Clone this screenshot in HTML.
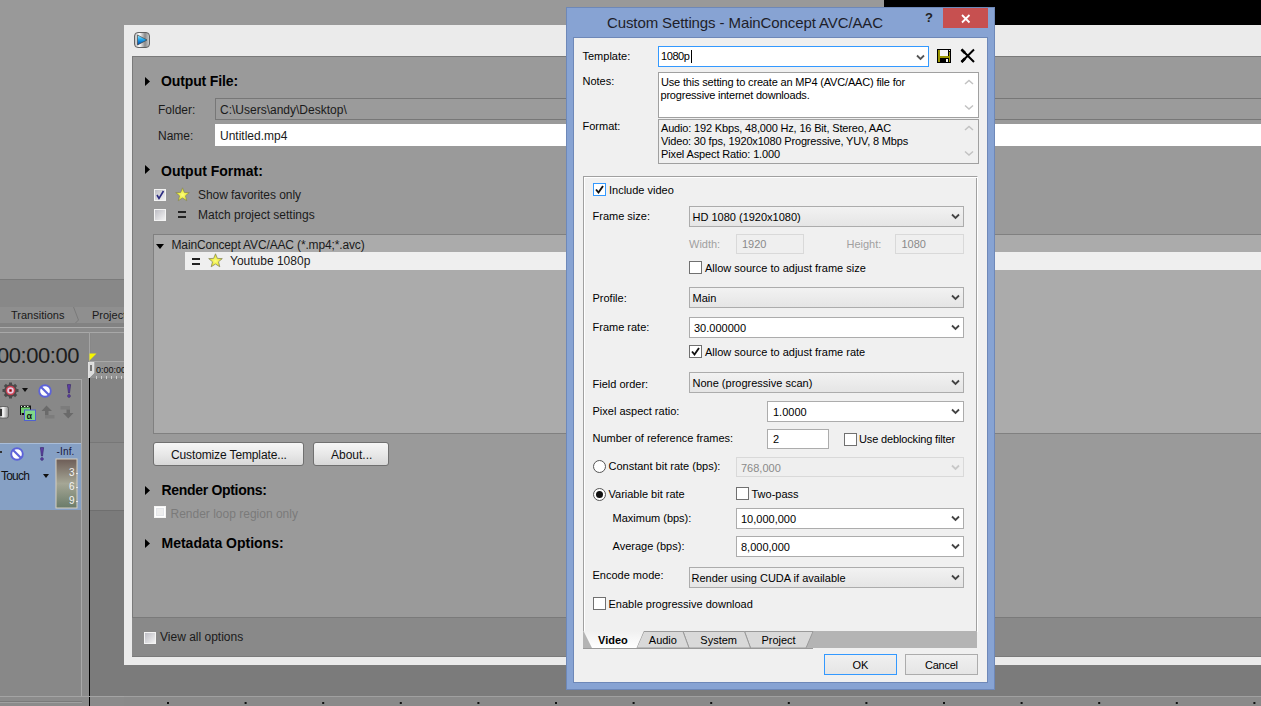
<!DOCTYPE html><html><head><meta charset="utf-8"><style>
html,body{margin:0;padding:0;width:1261px;height:706px;overflow:hidden;position:relative;background:#999}
body>div,body>svg{position:absolute}
.t{white-space:pre;font-family:"Liberation Sans",sans-serif}
</style></head><body>
<div style="left:0px;top:0px;width:1261px;height:706px;background:#999999"></div>
<div style="left:0px;top:279px;width:124px;height:427px;background:#888888"></div>
<div style="left:0px;top:279px;width:124px;height:1px;background:#7a7a7a"></div>
<div style="left:0px;top:307px;width:124px;height:16px;background:#8f8f8f"></div>
<div style="left:0px;top:323px;width:124px;height:4px;background:#828282"></div>
<div style="left:0px;top:327px;width:124px;height:1px;background:#ababab"></div>
<div style="left:0px;top:328px;width:124px;height:4px;background:#8a8a8a"></div>
<div style="left:0px;top:332px;width:124px;height:1px;background:#a8a8a8"></div>
<div class="t" style="left:11px;top:309.69px;font-size:11px;line-height:11px;color:#1a1a1a;">Transitions</div>
<div class="t" style="left:92px;top:309.69px;font-size:11px;line-height:11px;color:#1a1a1a;">Project</div>
<svg style="left:0;top:307px" width="124" height="20"><polyline points="73.5,0 78.5,13 75.5,16" stroke="#7a7a7a" fill="none"/></svg>
<div class="t" style="left:-3px;top:345.38px;font-size:22px;line-height:22px;color:#1c1c1c;letter-spacing:-0.455px;">00:00:00</div>
<div style="left:89px;top:332px;width:1px;height:46px;background:#a4a4a4"></div>
<div style="left:89px;top:378px;width:1px;height:328px;background:#000"></div>
<div style="left:91px;top:333px;width:33px;height:29px;background:#8b8b8b"></div>
<div style="left:90px;top:361px;width:34px;height:1px;background:#a8a8a8"></div>
<div style="left:90px;top:362px;width:34px;height:16px;background:#939393"></div>
<svg style="left:89px;top:353px" width="10" height="9"><polygon points="0.5,0.5 7.5,0.5 0.5,7.5" fill="#f6f600"/></svg>
<svg style="left:88px;top:362px" width="8" height="17"><polygon points="0,0 6,0 6,11 1,16 0,16" fill="#dcdcdc" stroke="#f0f0f0" stroke-width="0.5"/><rect x="2" y="3" width="2" height="6" fill="#777"/></svg>
<div class="t" style="left:96px;top:366.38px;font-size:9px;line-height:9px;color:#111;">0:00:00</div>
<div style="left:0px;top:379px;width:82px;height:1px;background:#a8a8a8"></div>
<div style="left:81px;top:379px;width:1px;height:327px;background:#a8a8a8"></div>
<div style="left:0px;top:380px;width:81px;height:316px;background:#888888"></div>
<div style="left:82px;top:378px;width:7px;height:328px;background:#8b8b8b"></div>
<div style="left:90px;top:378px;width:34px;height:64px;background:#848484"></div>
<div style="left:90px;top:442px;width:34px;height:1px;background:#777777"></div>
<div style="left:90px;top:443px;width:34px;height:67px;background:#878787"></div>
<div style="left:90px;top:510px;width:34px;height:1px;background:#6f6f6f"></div>
<div style="left:90px;top:511px;width:34px;height:186px;background:#7b7b7b"></div>
<svg style="left:90px;top:375px" width="34" height="4"><rect x="6" y="1" width="1" height="3" fill="#d0d0d0"/><rect x="11" y="1" width="1" height="3" fill="#d0d0d0"/><rect x="16" y="1" width="1" height="3" fill="#d0d0d0"/><rect x="21" y="1" width="1" height="3" fill="#d0d0d0"/><rect x="26" y="1" width="1" height="3" fill="#d0d0d0"/><rect x="31" y="1" width="1" height="3" fill="#d0d0d0"/></svg>
<div style="left:0px;top:443px;width:81px;height:67px;background:#86a0c4"></div>
<div style="left:0px;top:443px;width:81px;height:1px;background:#a9bdd9"></div>
<div style="left:0px;top:696px;width:124px;height:1px;background:#a4a4a4"></div>
<div style="left:0px;top:697px;width:124px;height:9px;background:#8b8b8b"></div>
<div style="left:0px;top:701px;width:82px;height:1px;background:#7a7a7a"></div>
<div style="left:0px;top:702px;width:82px;height:1px;background:#a0a0a0"></div>
<div style="left:89px;top:697px;width:1px;height:9px;background:#000"></div>
<svg style="left:2px;top:382px" width="18" height="18" viewBox="0 0 18 18">
<g fill="#4a4a4a"><circle cx="8.5" cy="8.5" r="6.3"/>
<rect x="7" y="0.5" width="3" height="16"/><rect x="0.5" y="7" width="16" height="3"/>
<rect x="7" y="0.5" width="3" height="16" transform="rotate(45 8.5 8.5)"/><rect x="7" y="0.5" width="3" height="16" transform="rotate(-45 8.5 8.5)"/></g>
<circle cx="8.5" cy="8.5" r="4.8" fill="#c84050"/><circle cx="8.5" cy="8.5" r="3.3" fill="#e8c8e0"/><rect x="7.3" y="7.3" width="2.4" height="2.4" fill="#900"/></svg>
<svg style="left:22px;top:388px" width="7" height="5"><polygon points="0,0 6,0 3,4" fill="#111"/></svg>
<svg style="left:38px;top:384px" width="14" height="14" viewBox="0 0 14 14"><circle cx="7" cy="7" r="5.8" fill="#fff" stroke="#5d63d8" stroke-width="1.9"/><line x1="3" y1="3" x2="11" y2="11" stroke="#5d63d8" stroke-width="2.2"/></svg>
<svg style="left:66px;top:384px" width="6" height="14" viewBox="0 0 6 14"><polygon points="1.4,0.6 4.6,0.6 3.5,9 2.5,9" fill="#6040a8" stroke="#302060" stroke-width="0.6"/><circle cx="3" cy="12" r="1.4" fill="#6040a8" stroke="#302060" stroke-width="0.5"/></svg>
<svg style="left:-3px;top:406px" width="12" height="13"><defs><linearGradient id="sl" x1="0" x2="1"><stop offset="0" stop-color="#555"/><stop offset="0.5" stop-color="#fafafa"/><stop offset="1" stop-color="#888"/></linearGradient></defs><rect x="0.5" y="0.5" width="11" height="11.5" rx="2" fill="url(#sl)" stroke="#555" stroke-width="0.8"/><rect x="2" y="3" width="3" height="7" fill="#333"/></svg>
<svg style="left:20px;top:405px" width="16" height="16" viewBox="0 0 16 16">
<rect x="0" y="0.5" width="11" height="9.5" fill="#111"/><rect x="1" y="2.5" width="9" height="5.5" fill="#70d070"/>
<g fill="#eee"><rect x="1" y="1" width="1" height="1"/><rect x="4" y="1" width="1.5" height="1"/><rect x="7" y="1" width="1.5" height="1"/><rect x="1" y="8.5" width="1" height="1"/></g>
<rect x="4.5" y="5" width="11" height="10.5" fill="#80d888" stroke="#5060d0" stroke-width="1"/>
<text x="6.5" y="13.5" font-family="Liberation Sans" font-size="9" font-weight="bold" fill="#111">&#945;</text></svg>
<svg style="left:41px;top:405px" width="14" height="15"><polygon points="5.5,0.5 11,6 7.5,6 7.5,10 4,10 4,6 0.5,6" fill="#6a6a6a"/><rect x="4" y="10" width="9.5" height="3.5" fill="#7c7c7c"/></svg>
<svg style="left:60px;top:406px" width="15" height="14"><rect x="0.5" y="0" width="9.5" height="3.5" fill="#7c7c7c"/><polygon points="6.5,3.5 10,3.5 10,7 13.5,7 8.3,12.5 3,7 6.5,7" fill="#6a6a6a"/></svg>
<div style="left:0px;top:451px;width:2px;height:2px;background:#333"></div>
<svg style="left:10px;top:447px" width="14" height="14" viewBox="0 0 14 14"><circle cx="7" cy="7" r="5.8" fill="#fff" stroke="#5d63d8" stroke-width="1.9"/><line x1="3" y1="3" x2="11" y2="11" stroke="#5d63d8" stroke-width="2.2"/></svg>
<svg style="left:39px;top:447px" width="6" height="14" viewBox="0 0 6 14"><polygon points="1.4,0.6 4.6,0.6 3.5,9 2.5,9" fill="#6040a8" stroke="#302060" stroke-width="0.6"/><circle cx="3" cy="12" r="1.4" fill="#6040a8" stroke="#302060" stroke-width="0.5"/></svg>
<div class="t" style="left:56.5px;top:446.53px;font-size:10px;line-height:10px;color:#1a1a40;letter-spacing:0.155px;">-Inf.</div>
<svg style="left:55px;top:458px" width="23" height="51" viewBox="0 0 23 51"><defs><linearGradient id="mg" x1="0" y1="0" x2="0" y2="1"><stop offset="0" stop-color="#6e5e58"/><stop offset="0.5" stop-color="#a5a695"/><stop offset="1" stop-color="#6b7c6a"/></linearGradient></defs>
<rect x="0.5" y="0.5" width="22" height="50" fill="#d8d0c0"/><rect x="1.5" y="1.5" width="20" height="48" fill="url(#mg)"/>
<rect x="21" y="15" width="2" height="1" fill="#e8e8e8"/><rect x="21" y="29" width="2" height="1" fill="#e8e8e8"/><rect x="21" y="43" width="2" height="1" fill="#e8e8e8"/>
<g font-family="Liberation Sans" font-size="10" fill="#f4f4f4"><text x="14" y="18">3</text><text x="14" y="32">6</text><text x="14" y="46">9</text></g></svg>
<div class="t" style="left:1px;top:469.84px;font-size:12px;line-height:12px;color:#111;letter-spacing:-0.804px;">Touch</div>
<svg style="left:43px;top:474px" width="7" height="5"><polygon points="0,0 6,0 3,4" fill="#111"/></svg>
<div style="left:124px;top:25px;width:1137px;height:640px;background:#ebebeb"></div>
<div style="left:132px;top:56px;width:1129px;height:601px;background:#9a9a9a"></div>
<div style="left:132px;top:56px;width:1129px;height:1px;background:#7a7a7a"></div>
<div style="left:132px;top:56px;width:1px;height:601px;background:#7a7a7a"></div>
<div style="left:132px;top:617px;width:1129px;height:40px;background:#898989"></div>
<div style="left:132px;top:617px;width:1129px;height:1px;background:#7a7a7a"></div>
<div style="left:132px;top:656px;width:1129px;height:1px;background:#7a7a7a"></div>
<div style="left:124px;top:665px;width:1137px;height:41px;background:#7b7b7b"></div>
<div style="left:124px;top:696px;width:1137px;height:1px;background:#a0a0a0"></div>
<div style="left:124px;top:697px;width:1137px;height:9px;background:#8a8a8a"></div>
<svg style="left:134px;top:32px" width="17" height="17" viewBox="0 0 17 17">
<defs><linearGradient id="ig" x1="0" y1="0" x2="1" y2="0"><stop offset="0" stop-color="#bbb"/><stop offset="0.35" stop-color="#fafafa"/><stop offset="0.7" stop-color="#8a8a8a"/><stop offset="1" stop-color="#d0d0d0"/></linearGradient>
<linearGradient id="bg1" x1="0" y1="0" x2="0" y2="1"><stop offset="0" stop-color="#a8f0ff"/><stop offset="0.45" stop-color="#20a8f0"/><stop offset="1" stop-color="#0040a0"/></linearGradient></defs>
<rect x="0.5" y="0.5" width="15" height="15" rx="3.5" fill="url(#ig)" stroke="#555" stroke-width="0.9"/>
<polygon points="3.5,3 13,8 3.5,13" fill="url(#bg1)" stroke="#333" stroke-width="0.6"/></svg>
<svg style="left:145px;top:77px" width="6" height="9"><polygon points="0,0 5,4.5 0,9" fill="#000"/></svg>
<div class="t" style="left:161px;top:74.15px;font-size:14px;line-height:14px;color:#000;font-weight:bold;letter-spacing:-0.128px;">Output File:</div>
<div class="t" style="left:158px;top:103.84px;font-size:12px;line-height:12px;color:#1a1a1a;">Folder:</div>
<div style="left:215px;top:98px;width:1046px;height:22px;background:#9b9b9b;box-sizing:border-box;border:1px solid #777;border-right:none"></div>
<div class="t" style="left:220px;top:103.84px;font-size:12px;line-height:12px;color:#1a1a1a;">C:\Users\andy\Desktop\</div>
<div class="t" style="left:158px;top:129.84px;font-size:12px;line-height:12px;color:#1a1a1a;">Name:</div>
<div style="left:215px;top:124px;width:1046px;height:22px;background:#fff"></div>
<div class="t" style="left:220px;top:129.84px;font-size:12px;line-height:12px;color:#1a1a1a;">Untitled.mp4</div>
<svg style="left:145px;top:165px" width="6" height="9"><polygon points="0,0 5,4.5 0,9" fill="#000"/></svg>
<div class="t" style="left:161px;top:163.65px;font-size:14px;line-height:14px;color:#000;font-weight:bold;">Output Format:</div>
<div style="left:154px;top:189px;width:12px;height:12px;box-sizing:border-box;border:1px solid #f4f4f4;background:linear-gradient(135deg,#bdbdc4,#f3f3f3)"></div>
<svg style="left:154px;top:189px" width="12" height="12"><polyline points="3,6 5,9.5 9.5,2" stroke="#2a2a80" stroke-width="1.6" fill="none"/></svg>
<svg style="left:175px;top:187px" width="15" height="15" viewBox="0 0 15 15"><defs><radialGradient id="sg175187" cx="0.5" cy="0.55" r="0.6"><stop offset="0" stop-color="#ffff80"/><stop offset="1" stop-color="#d8d800"/></radialGradient></defs>
<polygon points="7.5,0.8 9.4,5.4 14.3,5.6 10.5,8.8 11.8,13.8 7.5,11 3.2,13.8 4.5,8.8 0.7,5.6 5.6,5.4" fill="url(#sg175187)" stroke="#8a8a60" stroke-width="0.8"/></svg>
<div class="t" style="left:198px;top:188.84px;font-size:12px;line-height:12px;color:#1a1a1a;letter-spacing:-0.055px;">Show favorites only</div>
<div style="left:154px;top:209px;width:12px;height:12px;box-sizing:border-box;border:1px solid #f4f4f4;background:linear-gradient(135deg,#bdbdc4,#f3f3f3)"></div>
<div style="left:178px;top:211px;width:8px;height:2px;background:#222"></div>
<div style="left:178px;top:216px;width:8px;height:2px;background:#222"></div>
<div class="t" style="left:198px;top:208.84px;font-size:12px;line-height:12px;color:#1a1a1a;">Match project settings</div>
<div style="left:153px;top:234px;width:1108px;height:200px;background:#ababab;box-sizing:border-box;border:1px solid #808080;border-right:none"></div>
<svg style="left:156px;top:244px" width="9" height="6"><polygon points="0,0 8,0 4,5" fill="#000"/></svg>
<div class="t" style="left:171.5px;top:238.84px;font-size:12px;line-height:12px;color:#1a1a1a;letter-spacing:-0.147px;">MainConcept AVC/AAC (*.mp4;*.avc)</div>
<div style="left:185px;top:252px;width:1076px;height:18px;background:#efefef"></div>
<div style="left:192px;top:258px;width:8px;height:2px;background:#222"></div>
<div style="left:192px;top:263px;width:8px;height:2px;background:#222"></div>
<svg style="left:208px;top:253px" width="15" height="15" viewBox="0 0 15 15"><defs><radialGradient id="sg208253" cx="0.5" cy="0.55" r="0.6"><stop offset="0" stop-color="#ffff80"/><stop offset="1" stop-color="#d8d800"/></radialGradient></defs>
<polygon points="7.5,0.8 9.4,5.4 14.3,5.6 10.5,8.8 11.8,13.8 7.5,11 3.2,13.8 4.5,8.8 0.7,5.6 5.6,5.4" fill="url(#sg208253)" stroke="#8a8a60" stroke-width="0.8"/></svg>
<div class="t" style="left:230px;top:255.34px;font-size:12px;line-height:12px;color:#1a1a1a;">Youtube 1080p</div>
<div style="left:153px;top:442px;width:151px;height:24px;box-sizing:border-box;border:1px solid #707070;border-radius:3px;background:linear-gradient(#f6f6f6,#e8e8e8 50%,#d8d8d8)"></div>
<div class="t" style="left:171px;top:448.84px;font-size:12px;line-height:12px;color:#111;letter-spacing:-0.128px;">Customize Template...</div>
<div style="left:313px;top:442px;width:76px;height:24px;box-sizing:border-box;border:1px solid #707070;border-radius:3px;background:linear-gradient(#f6f6f6,#e8e8e8 50%,#d8d8d8)"></div>
<div class="t" style="left:331px;top:448.84px;font-size:12px;line-height:12px;color:#111;">About...</div>
<svg style="left:145px;top:486px" width="6" height="9"><polygon points="0,0 5,4.5 0,9" fill="#000"/></svg>
<div class="t" style="left:161.5px;top:483.15px;font-size:14px;line-height:14px;color:#000;font-weight:bold;letter-spacing:-0.311px;">Render Options:</div>
<div style="left:154px;top:506px;width:12px;height:12px;box-sizing:border-box;border:1px solid #f4f4f4;background:#eeeeee;box-shadow:inset 0 0 0 1px #fff, inset 0 0 0 2px #e4e6ea"></div>
<div class="t" style="left:170.5px;top:507.84px;font-size:12px;line-height:12px;color:#7a7a7a;">Render loop region only</div>
<svg style="left:145px;top:539px" width="6" height="9"><polygon points="0,0 5,4.5 0,9" fill="#000"/></svg>
<div class="t" style="left:161.5px;top:536.15px;font-size:14px;line-height:14px;color:#000;font-weight:bold;">Metadata Options:</div>
<div style="left:144px;top:632px;width:12px;height:12px;box-sizing:border-box;border:1px solid #f4f4f4;background:linear-gradient(135deg,#bdbdc4,#f3f3f3)"></div>
<div class="t" style="left:160px;top:631.34px;font-size:12px;line-height:12px;color:#1a1a1a;">View all options</div>
<svg style="left:0;top:697px" width="1261" height="9"><rect x="167.0" y="5" width="2" height="2" fill="#111"/><rect x="244.6" y="5" width="2" height="2" fill="#111"/><rect x="322.2" y="5" width="2" height="2" fill="#111"/><rect x="399.8" y="5" width="2" height="2" fill="#111"/><rect x="477.4" y="5" width="2" height="2" fill="#111"/><rect x="555.0" y="5" width="2" height="2" fill="#111"/><rect x="632.6" y="5" width="2" height="2" fill="#111"/><rect x="710.2" y="5" width="2" height="2" fill="#111"/><rect x="787.8" y="5" width="2" height="2" fill="#111"/><rect x="865.4" y="5" width="2" height="2" fill="#111"/><rect x="943.0" y="5" width="2" height="2" fill="#111"/><rect x="1020.6" y="5" width="2" height="2" fill="#111"/><rect x="1098.2" y="5" width="2" height="2" fill="#111"/><rect x="1175.8" y="5" width="2" height="2" fill="#111"/><rect x="1253.4" y="5" width="2" height="2" fill="#111"/></svg>
<div style="left:884px;top:0px;width:377px;height:25px;background:#000"></div>
<div style="left:566px;top:7px;width:429px;height:683px;background:#87a3d3;box-sizing:border-box;border:1px solid #6e88b8"></div>
<div class="t" style="left:607px;top:15.30px;font-size:15px;line-height:15px;color:#1e1e2a;letter-spacing:-0.104px;">Custom Settings - MainConcept AVC/AAC</div>
<div class="t" style="left:925px;top:11.00px;font-size:13px;line-height:13px;color:#222;font-weight:bold;">?</div>
<div style="left:943px;top:8px;width:45px;height:20px;background:#c75050"></div>
<svg style="left:960px;top:14px" width="12" height="10"><path d="M2,1 L9.5,8.5 M9.5,1 L2,8.5" stroke="#fff" stroke-width="1.8"/></svg>
<div style="left:573px;top:37px;width:415px;height:646px;background:#f0f0f0;box-sizing:border-box;border:1px solid #6e88b8"></div>
<div class="t" style="left:582.5px;top:50.69px;font-size:11px;line-height:11px;color:#000;">Template:</div>
<div style="left:658px;top:46px;width:271px;height:21px;background:#fff;box-sizing:border-box;border:1px solid #3399ff"></div>
<div class="t" style="left:661px;top:51.19px;font-size:11px;line-height:11px;color:#000;letter-spacing:-0.418px;">1080p</div>
<div style="left:691px;top:50px;width:1px;height:13px;background:#000"></div>
<svg style="left:916px;top:53.5px" width="10" height="8"><polyline points="1,1.5 4.5,5 8,1.5" stroke="#555" stroke-width="1.8" fill="none"/></svg>
<svg style="left:937px;top:49px" width="14" height="14" viewBox="0 0 14 14" shape-rendering="crispEdges">
<rect x="0" y="0" width="14" height="14" fill="#000"/>
<rect x="1" y="1" width="2" height="12" fill="#9a9600"/>
<rect x="3" y="1" width="8" height="6" fill="#f4f4f4"/>
<rect x="2" y="7" width="11" height="2" fill="#9a9600"/>
<rect x="12" y="3" width="1" height="10" fill="#9a9600"/>
<rect x="12" y="1" width="1" height="1" fill="#f4f4f4"/>
<rect x="9" y="10" width="2" height="3" fill="#f4f4f4"/>
</svg>
<svg style="left:960px;top:48px" width="16" height="16"><path d="M1.5,1.5 L14,14 M14,1.5 L1.5,14" stroke="#000" stroke-width="2"/><path d="M1.5,1.5 L5,5 M1.5,14 L5,10.5" stroke="#000" stroke-width="2.6"/></svg>
<div class="t" style="left:582.5px;top:75.99px;font-size:11px;line-height:11px;color:#000;">Notes:</div>
<div style="left:658px;top:72px;width:321px;height:46px;background:#fff;box-sizing:border-box;border:1px solid #a0a0a0"></div>
<div class="t" style="left:661px;top:77.19px;font-size:11px;line-height:11px;color:#000;letter-spacing:-0.171px;">Use this setting to create an MP4 (AVC/AAC) file for</div>
<div class="t" style="left:660.5px;top:89.99px;font-size:11px;line-height:11px;color:#000;letter-spacing:-0.204px;">progressive internet downloads.</div>
<svg style="left:964px;top:79px" width="10" height="7"><polyline points="1,5 5,1.5 9,5" stroke="#c2c2c2" stroke-width="1.5" fill="none"/></svg>
<svg style="left:964px;top:104px" width="10" height="7"><polyline points="1,1.5 5,5 9,1.5" stroke="#c2c2c2" stroke-width="1.5" fill="none"/></svg>
<div class="t" style="left:582.5px;top:120.69px;font-size:11px;line-height:11px;color:#000;">Format:</div>
<div style="left:658px;top:119px;width:321px;height:45px;background:#f0f0f0;box-sizing:border-box;border:1px solid #a0a0a0"></div>
<div class="t" style="left:661px;top:123.19px;font-size:11px;line-height:11px;color:#000;letter-spacing:-0.168px;">Audio: 192 Kbps, 48,000 Hz, 16 Bit, Stereo, AAC</div>
<div class="t" style="left:661px;top:135.69px;font-size:11px;line-height:11px;color:#000;letter-spacing:-0.172px;">Video: 30 fps, 1920x1080 Progressive, YUV, 8 Mbps</div>
<div class="t" style="left:661px;top:148.69px;font-size:11px;line-height:11px;color:#000;letter-spacing:-0.132px;">Pixel Aspect Ratio: 1.000</div>
<svg style="left:964px;top:125px" width="10" height="7"><polyline points="1,5 5,1.5 9,5" stroke="#c2c2c2" stroke-width="1.5" fill="none"/></svg>
<svg style="left:964px;top:150px" width="10" height="7"><polyline points="1,1.5 5,5 9,1.5" stroke="#c2c2c2" stroke-width="1.5" fill="none"/></svg>
<div style="left:583px;top:176px;width:395px;height:456px;box-sizing:border-box;border:1px solid #a0a0a0;border-right-color:#fff;border-bottom:none;box-shadow:inset 1px 1px 0 #fff, inset -1px 0 0 #a0a0a0"></div>
<div style="left:593px;top:183px;width:13px;height:13px;background:#fff;box-sizing:border-box;border:1px solid #3399ff"></div>
<svg style="left:593px;top:183px" width="13" height="13"><polyline points="3,6.5 5.5,9.5 10,3" stroke="#111" stroke-width="1.9" fill="none"/></svg>
<div class="t" style="left:609px;top:184.69px;font-size:11px;line-height:11px;color:#000;">Include video</div>
<div class="t" style="left:592.5px;top:210.69px;font-size:11px;line-height:11px;color:#000;">Frame size:</div>
<div style="left:689px;top:206px;width:275px;height:21px;box-sizing:border-box;background:linear-gradient(#f2f2f2,#e5e5e5);border:1px solid #acacac"></div>
<div class="t" style="left:692.5px;top:211.69px;font-size:11px;line-height:11px;color:#000;">HD 1080 (1920x1080)</div>
<svg style="left:951px;top:213px" width="10" height="8"><polyline points="1,1.5 4.5,5 8,1.5" stroke="#444" stroke-width="1.8" fill="none"/></svg>
<div class="t" style="left:689px;top:238.69px;font-size:11px;line-height:11px;color:#a0a0a0;">Width:</div>
<div style="left:736px;top:234px;width:68px;height:20px;background:#efefef;box-sizing:border-box;border:1px solid #d9d9d9"></div>
<div class="t" style="left:742px;top:238.69px;font-size:11px;line-height:11px;color:#8a8a8a;">1920</div>
<div class="t" style="left:846.5px;top:238.69px;font-size:11px;line-height:11px;color:#a0a0a0;">Height:</div>
<div style="left:895px;top:234px;width:69px;height:20px;background:#efefef;box-sizing:border-box;border:1px solid #d9d9d9"></div>
<div class="t" style="left:901.5px;top:238.69px;font-size:11px;line-height:11px;color:#8a8a8a;">1080</div>
<div style="left:689px;top:261px;width:13px;height:13px;background:#fff;box-sizing:border-box;border:1px solid #707070"></div>
<div class="t" style="left:705px;top:262.69px;font-size:11px;line-height:11px;color:#000;">Allow source to adjust frame size</div>
<div class="t" style="left:592.5px;top:292.69px;font-size:11px;line-height:11px;color:#000;">Profile:</div>
<div style="left:689px;top:287px;width:275px;height:21px;box-sizing:border-box;background:linear-gradient(#f2f2f2,#e5e5e5);border:1px solid #acacac"></div>
<div class="t" style="left:692.5px;top:292.69px;font-size:11px;line-height:11px;color:#000;">Main</div>
<svg style="left:951px;top:294px" width="10" height="8"><polyline points="1,1.5 4.5,5 8,1.5" stroke="#444" stroke-width="1.8" fill="none"/></svg>
<div class="t" style="left:592.5px;top:321.69px;font-size:11px;line-height:11px;color:#000;">Frame rate:</div>
<div style="left:689px;top:317px;width:275px;height:21px;box-sizing:border-box;background:#fff;border:1px solid #acacac"></div>
<div class="t" style="left:694px;top:322.69px;font-size:11px;line-height:11px;color:#000;">30.000000</div>
<svg style="left:951px;top:324px" width="10" height="8"><polyline points="1,1.5 4.5,5 8,1.5" stroke="#444" stroke-width="1.8" fill="none"/></svg>
<div style="left:689px;top:345px;width:13px;height:13px;background:#fff;box-sizing:border-box;border:1px solid #707070"></div>
<svg style="left:689px;top:345px" width="13" height="13"><polyline points="3,6.5 5.5,9.5 10,3" stroke="#111" stroke-width="1.9" fill="none"/></svg>
<div class="t" style="left:705px;top:346.69px;font-size:11px;line-height:11px;color:#000;">Allow source to adjust frame rate</div>
<div class="t" style="left:592.5px;top:378.69px;font-size:11px;line-height:11px;color:#000;">Field order:</div>
<div style="left:689px;top:372px;width:275px;height:21px;box-sizing:border-box;background:linear-gradient(#f2f2f2,#e5e5e5);border:1px solid #acacac"></div>
<div class="t" style="left:692.5px;top:377.69px;font-size:11px;line-height:11px;color:#000;">None (progressive scan)</div>
<svg style="left:951px;top:379px" width="10" height="8"><polyline points="1,1.5 4.5,5 8,1.5" stroke="#444" stroke-width="1.8" fill="none"/></svg>
<div class="t" style="left:592.5px;top:405.69px;font-size:11px;line-height:11px;color:#000;">Pixel aspect ratio:</div>
<div style="left:767px;top:401px;width:197px;height:21px;box-sizing:border-box;background:#fff;border:1px solid #acacac"></div>
<div class="t" style="left:773px;top:406.69px;font-size:11px;line-height:11px;color:#000;">1.0000</div>
<svg style="left:951px;top:408px" width="10" height="8"><polyline points="1,1.5 4.5,5 8,1.5" stroke="#444" stroke-width="1.8" fill="none"/></svg>
<div class="t" style="left:592.5px;top:433.19px;font-size:11px;line-height:11px;color:#000;">Number of reference frames:</div>
<div style="left:767px;top:429px;width:62px;height:20px;background:#fff;box-sizing:border-box;border:1px solid #acacac"></div>
<div class="t" style="left:773px;top:433.69px;font-size:11px;line-height:11px;color:#000;">2</div>
<div style="left:844px;top:433px;width:13px;height:13px;background:#fff;box-sizing:border-box;border:1px solid #707070"></div>
<div class="t" style="left:859px;top:434.19px;font-size:11px;line-height:11px;color:#000;letter-spacing:-0.145px;">Use deblocking filter</div>
<svg style="left:593px;top:460px" width="13" height="13"><circle cx="6.5" cy="6.5" r="6" fill="#fff" stroke="#555" stroke-width="1"/></svg>
<div class="t" style="left:608.5px;top:460.69px;font-size:11px;line-height:11px;color:#000;">Constant bit rate (bps):</div>
<div style="left:736px;top:457px;width:228px;height:20px;box-sizing:border-box;background:#efefef;border:1px solid #d9d9d9"></div>
<div class="t" style="left:741px;top:462.69px;font-size:11px;line-height:11px;color:#8a8a8a;">768,000</div>
<svg style="left:951px;top:464px" width="10" height="8"><polyline points="1,1.5 4.5,5 8,1.5" stroke="#c8c8c8" stroke-width="1.8" fill="none"/></svg>
<svg style="left:593px;top:488px" width="13" height="13"><circle cx="6.5" cy="6.5" r="6" fill="#fff" stroke="#555" stroke-width="1"/><circle cx="6.5" cy="6.5" r="3.5" fill="#111"/></svg>
<div class="t" style="left:608.5px;top:488.69px;font-size:11px;line-height:11px;color:#000;">Variable bit rate</div>
<div style="left:736px;top:487px;width:13px;height:13px;background:#fff;box-sizing:border-box;border:1px solid #707070"></div>
<div class="t" style="left:751.5px;top:488.69px;font-size:11px;line-height:11px;color:#000;">Two-pass</div>
<div class="t" style="left:612.5px;top:513.19px;font-size:11px;line-height:11px;color:#000;">Maximum (bps):</div>
<div style="left:736px;top:508px;width:228px;height:21px;box-sizing:border-box;background:#fff;border:1px solid #acacac"></div>
<div class="t" style="left:741px;top:513.69px;font-size:11px;line-height:11px;color:#000;">10,000,000</div>
<svg style="left:951px;top:515px" width="10" height="8"><polyline points="1,1.5 4.5,5 8,1.5" stroke="#444" stroke-width="1.8" fill="none"/></svg>
<div class="t" style="left:612.5px;top:540.69px;font-size:11px;line-height:11px;color:#000;">Average (bps):</div>
<div style="left:736px;top:536px;width:228px;height:21px;box-sizing:border-box;background:#fff;border:1px solid #acacac"></div>
<div class="t" style="left:741px;top:541.69px;font-size:11px;line-height:11px;color:#000;">8,000,000</div>
<svg style="left:951px;top:543px" width="10" height="8"><polyline points="1,1.5 4.5,5 8,1.5" stroke="#444" stroke-width="1.8" fill="none"/></svg>
<div class="t" style="left:592.5px;top:570.19px;font-size:11px;line-height:11px;color:#000;">Encode mode:</div>
<div style="left:689px;top:567px;width:275px;height:21px;box-sizing:border-box;background:linear-gradient(#f2f2f2,#e5e5e5);border:1px solid #acacac"></div>
<div class="t" style="left:691.5px;top:572.69px;font-size:11px;line-height:11px;color:#000;">Render using CUDA if available</div>
<svg style="left:951px;top:574px" width="10" height="8"><polyline points="1,1.5 4.5,5 8,1.5" stroke="#444" stroke-width="1.8" fill="none"/></svg>
<div style="left:593px;top:597px;width:13px;height:13px;background:#fff;box-sizing:border-box;border:1px solid #707070"></div>
<div class="t" style="left:608.5px;top:598.69px;font-size:11px;line-height:11px;color:#000;">Enable progressive download</div>
<svg style="left:583px;top:631px" width="395" height="19" viewBox="583 631 395 19">
<rect x="583" y="631" width="394" height="17" fill="#b4b4b4"/>
<polygon points="744.5,631.5 813,631.5 806,648 750.5,648" fill="#d9d9d9" stroke="#9a9a9a" stroke-width="1"/>
<polygon points="683,631.5 744.5,631.5 750.5,648 689,648" fill="#d9d9d9" stroke="#9a9a9a" stroke-width="1"/>
<polygon points="643.8,631.5 683,631.5 689,648 636.5,648" fill="#d9d9d9" stroke="#9a9a9a" stroke-width="1"/>
<defs><linearGradient id="vt" x1="0" y1="0" x2="0" y2="1"><stop offset="0" stop-color="#f0f0f0"/><stop offset="1" stop-color="#ffffff"/></linearGradient></defs>
<polygon points="583.5,631 643.8,631 636.5,648 592,648" fill="url(#vt)"/>
<line x1="583" y1="648.5" x2="813" y2="648.5" stroke="#9a9a9a" stroke-width="1"/>
</svg>
<div class="t" style="left:598px;top:634.69px;font-size:11px;line-height:11px;color:#000;font-weight:bold;">Video</div>
<div class="t" style="left:648.8px;top:634.69px;font-size:11px;line-height:11px;color:#000;">Audio</div>
<div class="t" style="left:700.3px;top:634.69px;font-size:11px;line-height:11px;color:#000;">System</div>
<div class="t" style="left:761.4px;top:634.69px;font-size:11px;line-height:11px;color:#000;">Project</div>
<div style="left:824px;top:654px;width:73px;height:21px;box-sizing:border-box;border:1px solid #3399ff;background:linear-gradient(#f0f0f0,#e5e5e5)"></div>
<div class="t" style="left:852.5px;top:659.69px;font-size:11px;line-height:11px;color:#000;">OK</div>
<div style="left:905px;top:654px;width:73px;height:21px;box-sizing:border-box;border:1px solid #acacac;background:linear-gradient(#f0f0f0,#e5e5e5)"></div>
<div class="t" style="left:925px;top:659.69px;font-size:11px;line-height:11px;color:#000;letter-spacing:-0.257px;">Cancel</div>
</body></html>
